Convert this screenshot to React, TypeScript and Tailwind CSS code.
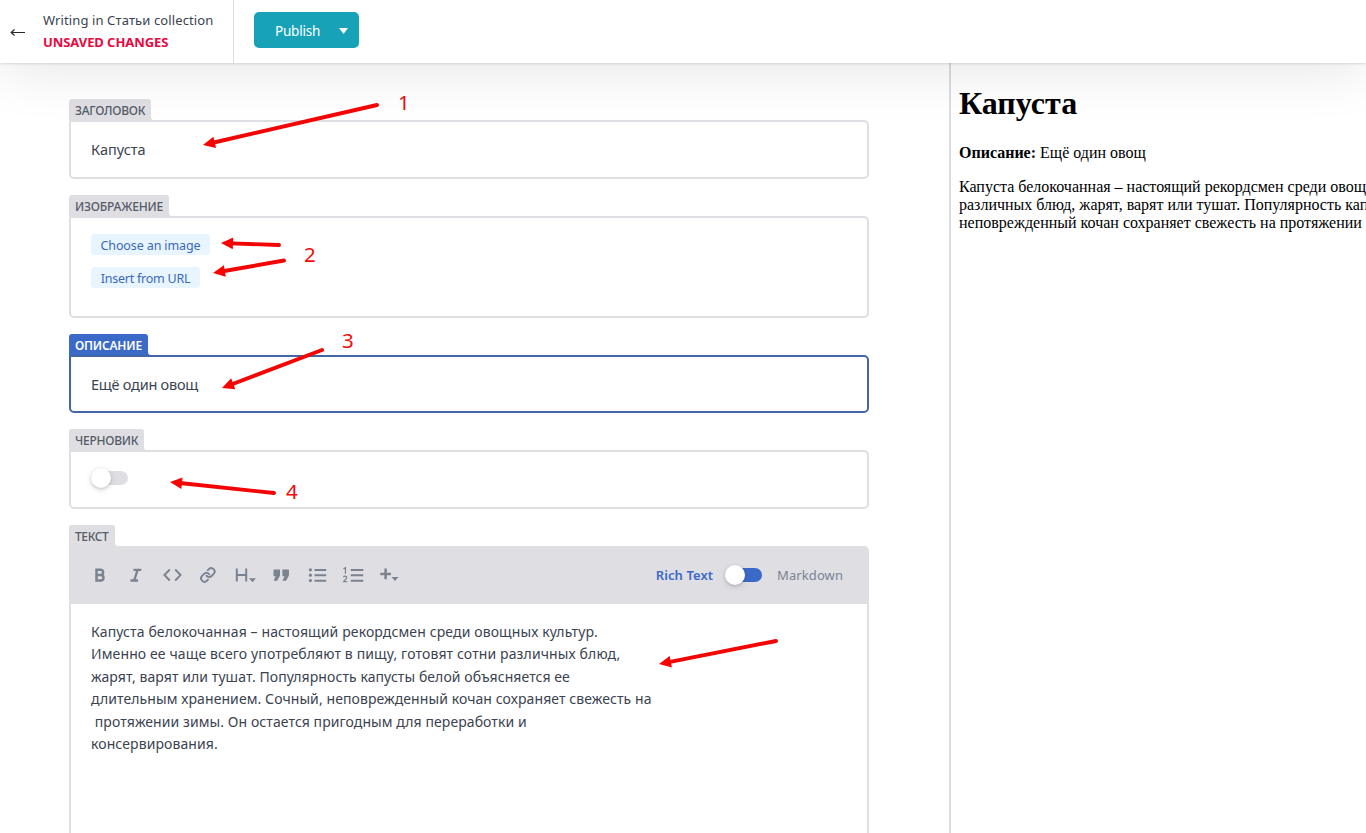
import React from "react";

const UI = "font-['Noto_Sans','Open_Sans',sans-serif]";

function Field({
  label,
  labelClass,
  boxClass,
  active = false,
  children,
}: {
  label: string;
  labelClass: string;
  boxClass: string;
  active?: boolean;
  children: React.ReactNode;
}) {
  return (
    <section className="mb-4 flex flex-col items-start">
      <div className="flex items-end">
        <div
          className={`flex h-[21px] items-center whitespace-nowrap rounded-t-[3px] pl-1.5 pt-0.5 text-xs ${labelClass} ${
            active ? "bg-[#3a69c7] font-semibold text-white" : "bg-[#dfdfe3] font-medium text-[#565b68]"
          }`}
        >
          {label}
        </div>
        <svg className={`block h-[3px] w-[3px] ${active ? "text-[#3a69c7]" : "text-[#dfdfe3]"}`} viewBox="0 0 3 3">
          <path d="M0 0Q0 3 3 3H0Z" fill="currentColor" />
        </svg>
      </div>
      <div
        className={`w-full rounded-b-[5px] rounded-tr-[5px] border-2 bg-white ${boxClass} ${
          active ? "border-[#4367a6]" : "border-[#dfdfe3]"
        }`}
      >
        {children}
      </div>
    </section>
  );
}

function Toggle({ on }: { on?: boolean }) {
  return (
    <span className="relative flex h-5 w-[37px] items-center">
      <span className={`ml-1 h-3.5 w-[33px] rounded-full ${on ? "bg-[#3a69c7]" : "bg-[#dfdfe3]"}`} />
      <span className="absolute left-0 top-0 h-5 w-5 rounded-full bg-white shadow-[0_2px_6px_0_rgba(68,74,87,0.15),0_1px_3px_0_rgba(68,74,87,0.25)]" />
    </span>
  );
}

function ToolbarIcons() {
  return (
    <svg className="block h-6 w-[320px] text-[#7b8290]" viewBox="90 563 320 24" fill="none" stroke="currentColor">
      <path d="M96.500 569.800h4a2.600 2.600 0 0 1 0 5.200h-4zM96.500 575h4.700a2.800 2.800 0 0 1 0 5.500h-4.700z" strokeWidth="2.500" />
      <path d="M133.500 569.800h7.800M130.500 580.500h7.500M137.600 569.800l-3.400 10.700" strokeWidth="2.300" />
      <path d="M169.800 569.500l-5.400 5.500 5.400 5.500M175.200 569.500l5.400 5.500-5.400 5.500" strokeWidth="1.900" />
      <g transform="translate(199.700 566.800) scale(.68)" strokeWidth="2.700" strokeLinecap="round">
        <path d="M10 13a5 5 0 0 0 7.540.540l3-3a5 5 0 0 0-7.070-7.070l-1.720 1.710" />
        <path d="M14 11a5 5 0 0 0-7.540-.540l-3 3a5 5 0 0 0 7.070 7.070l1.710-1.710" />
      </g>
      <path d="M236.800 568.500v13M246.200 568.500v13M236.800 575h9.400" strokeWidth="2" />
      <path d="M249 578.200h7l-3.500 4zM391.500 577h7l-3.500 4z" fill="currentColor" stroke="none" />
      <path
        d="M273.500 569.500h6.500v6l-2.800 5.300h-3.600l2-4.600h-2.100zM282.400 569.500h6.500v6l-2.800 5.300h-3.600l2-4.600h-2.100z"
        fill="currentColor"
        stroke="none"
      />
      <path d="M314.500 570h11.700M314.500 575.300h11.700M314.500 580.700h11.700M350.800 570h12.500M350.800 575.300h12.500M350.800 580.700h12.500" strokeWidth="1.900" />
      <g fill="currentColor" stroke="none">
        <circle cx="310.400" cy="569.800" r="1.600" />
        <circle cx="310.400" cy="575.200" r="1.600" />
        <circle cx="310.400" cy="580.600" r="1.600" />
      </g>
      <path d="M343.400 568.700l2-1v6M343.400 577.200q.6-1.300 2-1.100 2 .5.900 2.300l-2.600 3.200h3.600" strokeWidth="1.200" />
      <path d="M380.300 573.900h10.600M385.600 568.600v10.600" strokeWidth="2.500" />
    </svg>
  );
}

const paragraph: [string, string][] = [
  ["Капуста белокочанная – настоящий рекордсмен среди овощных культур.", "tracking-[0.120px]"],
  ["Именно ее чаще всего употребляют в пищу, готовят сотни различных блюд,", "tracking-[0.120px]"],
  ["жарят, варят или тушат. Популярность капусты белой объясняется ее", "tracking-[0.080px]"],
  ["длительным хранением. Сочный, неповрежденный кочан сохраняет свежесть на", "tracking-[0.085px]"],
  ["\u00a0протяжении зимы. Он остается пригодным для переработки и", "tracking-[0.080px]"],
  ["консервирования.", "tracking-[0.100px]"],
];

const arrows: [number, number, number, number][] = [
  [377, 105, 203, 145],
  [279, 245, 221, 243],
  [284, 260.5, 213, 273],
  [322, 350, 222, 388],
  [274, 493, 170, 482],
  [776, 641, 659, 664],
];

function Arrow({ from }: { from: [number, number, number, number] }) {
  const [x1, y1, x2, y2] = from;
  const length = Math.hypot(x2 - x1, y2 - y1);
  const angle = (Math.atan2(y2 - y1, x2 - x1) * 180) / Math.PI;
  return (
    <g transform={`translate(${x1} ${y1}) rotate(${angle})`}>
      <path d={`M0 0H${length - 10}`} stroke="#f20505" strokeWidth="3.900" strokeLinecap="round" />
      <path d={`M${length} 0L${length - 12} -5.800V5.800Z`} fill="#fb0202" />
    </g>
  );
}

export default function App() {
  return (
    <div className={`relative flex h-[833px] w-[1366px] flex-col overflow-hidden bg-white text-[#3c4350] ${UI}`}>
      <header className="relative z-10 flex h-[63px] shrink-0 bg-white shadow-[0_0_3px_0_rgba(0,0,0,0.22),0_8px_54px_0_rgba(0,0,0,0.1)]">
        <div className="flex w-[234px] items-center border-r border-[#dcdcde]">
          <svg className="ml-[10px] h-3 w-4" viewBox="0 0 16 12" fill="none" stroke="#26292e" strokeWidth="1.200">
            <path d="M15 6.500H1.500M4.500 3.500L1.200 6.500l3.300 3" />
          </svg>
          <div className="mb-0.5 ml-[17px] flex flex-col whitespace-nowrap">
            <span className="text-[13px] leading-[22px] tracking-[0.110px]">Writing in Статьи collection</span>
            <span className="text-[13px] font-bold leading-[22px] tracking-[-0.070px] text-[#e8083f]">UNSAVED CHANGES</span>
          </div>
        </div>
        <button className="ml-5 mt-3 flex h-9 w-[105px] items-center rounded-[5px] bg-[#17a2b8] pl-[21px] text-white">
          <span className="pt-0.5 text-[13.5px] tracking-[-0.200px]">Publish</span>
          <svg className="ml-auto mr-[11px] mt-0.5 h-1.5 w-[9px]" viewBox="0 0 9 6">
            <path d="M0 0h9L4.500 6z" fill="white" />
          </svg>
        </button>
      </header>
      <div className="flex min-h-0 flex-1">
        <main className="w-[949px] shrink-0 pl-[69px] pr-20 pt-9">
          <Field label="ЗАГОЛОВОК" labelClass="w-[82px] tracking-[-0.240px]" boxClass="h-[59px] px-5 pt-4">
            <p className="text-[14.5px] leading-[22px]">Капуста</p>
          </Field>
          <Field label="ИЗОБРАЖЕНИЕ" labelClass="w-[100px] tracking-[-0.200px]" boxClass="h-[102px] px-5 pt-4">
            <div className="flex flex-col items-start gap-3 text-[12.5px] text-[#3a69b8]">
              <button className="flex h-[21px] w-[119px] items-center justify-center whitespace-nowrap rounded-[4px] bg-[#e8f5fe] pt-[3px] leading-[18px] tracking-[-0.120px]">
                Choose an image
              </button>
              <button className="flex h-[21px] w-[109px] items-center justify-center whitespace-nowrap rounded-[4px] bg-[#e8f5fe] pt-[3px] leading-[18px] tracking-[-0.240px]">
                Insert from URL
              </button>
            </div>
          </Field>
          <Field active label="ОПИСАНИЕ" labelClass="w-[79px] tracking-[-0.200px]" boxClass="h-[58px] px-5 pt-4">
            <p className="text-[14.5px] leading-[22px] tracking-[-0.240px]">Ещё один овощ</p>
          </Field>
          <Field label="ЧЕРНОВИК" labelClass="w-[75px] tracking-[-0.240px]" boxClass="h-[59px] px-5 pt-4">
            <Toggle />
          </Field>
          <Field label="ТЕКСТ" labelClass="w-[46px] tracking-[-0.400px]" boxClass="h-[320px]">
            <div className="flex h-14 items-center bg-[#dfdfe3] pb-0.5 pl-[19px] pr-6 text-sm">
              <ToolbarIcons />
              <span className="ml-auto whitespace-nowrap text-[13px] font-semibold tracking-[0.080px] text-[#3a69c7]">Rich Text</span>
              <span className="mx-3 flex">
                <Toggle on />
              </span>
              <span className="ml-[3px] whitespace-nowrap text-[13px] tracking-[0.080px] text-[#7b8290]">Markdown</span>
            </div>
            <div className="px-5 pt-[17px] text-sm">
              {paragraph.map(([line, tracking]) => (
                <p key={line} className={`whitespace-nowrap leading-[22.400px] ${tracking}`}>
                  {line}
                </p>
              ))}
            </div>
          </Field>
        </main>
        <aside className="min-w-0 flex-1 overflow-hidden border-l-2 border-[#dcdcde] pl-2 font-['Liberation_Serif',serif] text-base leading-[18px] text-black">
          <h1 className="mt-[22px] text-[32px] font-bold leading-9">Капуста</h1>
          <p className="mt-[23px] whitespace-nowrap">
            <b>Описание:</b> Ещё один овощ
          </p>
          <p className="mt-4 whitespace-nowrap">
            Капуста белокочанная – настоящий рекордсмен среди овощных
            <br />
            различных блюд, жарят, варят или тушат. Популярность капусты
            <br />
            неповрежденный кочан сохраняет свежесть на протяжении
          </p>
        </aside>
      </div>
      <svg className="pointer-events-none absolute inset-0 z-20 h-[833px] w-[1366px]" viewBox="0 0 1366 833">
        {arrows.map((a) => (
          <Arrow key={a.join()} from={a} />
        ))}
        <g fill="#f00a0a" fontSize="20.5">
          <text x="398" y="110">1</text>
          <text x="304" y="262">2</text>
          <text x="342" y="348">3</text>
          <text x="286" y="499">4</text>
        </g>
      </svg>
    </div>
  );
}
